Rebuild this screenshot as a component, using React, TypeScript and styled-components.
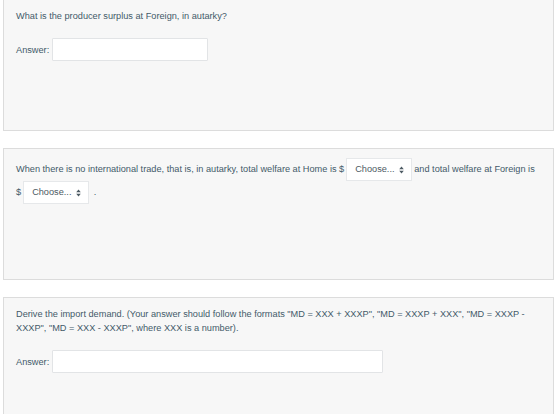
import styled, { createGlobalStyle } from "styled-components";

const GlobalStyle = createGlobalStyle`
  html, body {
    margin: 0;
    padding: 0;
    background: #ffffff;
  }
  body {
    font-family: "Liberation Sans", Arial, sans-serif;
    color: #435a69;
  }
`;

const Page = styled.div`
  width: 551px;
  margin: -1px 0 0 3px;
  display: flex;
  flex-direction: column;
  gap: 17px;
`;

const QuestionCard = styled.div`
  box-sizing: border-box;
  min-height: 132px;
  padding: 9px 12px;
  background: #f7f7f7;
  border: 1px solid #dcdcdc;
`;

const Prompt = styled.p<{ $tall?: boolean }>`
  margin: 0;
  font-size: 9.2px;
  line-height: ${({ $tall }) => ($tall ? "23px" : "14px")};
  white-space: nowrap;
`;

const AnswerRow = styled.div`
  display: flex;
  align-items: center;
  gap: 3px;
  margin-top: 15px;
  font-size: 9.2px;
`;

const AnswerInput = styled.input<{ $width: number }>`
  box-sizing: border-box;
  width: ${({ $width }) => $width}px;
  height: 23px;
  padding: 0 6px;
  background: #ffffff;
  border: 1px solid #e2e4e6;
  border-radius: 1px;
  font: inherit;
  outline: none;
`;

const Select = styled.span`
  box-sizing: border-box;
  display: inline-flex;
  align-items: center;
  justify-content: space-between;
  width: 66px;
  height: 23px;
  margin: 0 2px;
  padding: 0 7px 0 8px;
  vertical-align: middle;
  background: #ffffff;
  border: 1px solid #e6e8ea;
  color: #4d5a63;
  font-size: 9.2px;
  line-height: 21px;

  svg {
    width: 5px;
    height: 8px;
  }
`;

function ChooseSelect() {
  return (
    <Select>
      Choose...
      <svg viewBox="0 0 5 8">
        <path d="M2.5 0.5 L4.8 3.3 H0.2 Z M2.5 7.5 L4.8 4.7 H0.2 Z" fill="#4d5a63" />
      </svg>
    </Select>
  );
}

export default function App() {
  return (
    <>
      <GlobalStyle />
      <Page>
        <QuestionCard>
          <Prompt>What is the producer surplus at Foreign, in autarky?</Prompt>
          <AnswerRow>
            Answer:
            <AnswerInput $width={156} type="text" />
          </AnswerRow>
        </QuestionCard>

        <QuestionCard>
          <Prompt $tall>
            When there is no international trade, that is, in autarky, total welfare at Home is $
            <ChooseSelect />
            and total welfare at Foreign is
            <br />$<ChooseSelect /> .
          </Prompt>
        </QuestionCard>

        <QuestionCard>
          <Prompt>
            Derive the import demand. (Your answer should follow the formats "MD = XXX + XXXP", "MD = XXXP + XXX", "MD = XXXP -
            <br />
            XXXP", "MD = XXX - XXXP", where XXX is a number).
          </Prompt>
          <AnswerRow>
            Answer:
            <AnswerInput $width={331} type="text" />
          </AnswerRow>
        </QuestionCard>
      </Page>
    </>
  );
}
